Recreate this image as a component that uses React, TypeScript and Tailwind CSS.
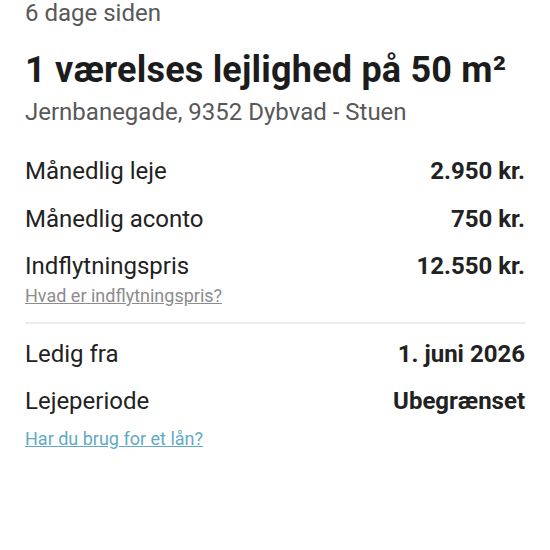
export default function App() {
  const rows1 = [
    { label: 'Månedlig leje', value: '2.950 kr.' },
    { label: 'Månedlig aconto', value: '750 kr.' },
    { label: 'Indflytningspris', value: '12.550 kr.' },
  ]
  const rows2 = [
    { label: 'Ledig fra', value: '1. juni 2026' },
    { label: 'Lejeperiode', value: 'Ubegrænset' },
  ]
  return (
    <div className="w-[550px] h-[550px] overflow-hidden bg-white px-[25px] text-[#222]" style={{ fontFamily: 'Roboto, sans-serif' }}>
      <p className="-mt-[1px] text-[24px] leading-[28px] text-[#585858]">6 dage siden</p>
      <h1 className="mt-[22px] text-[36px] leading-[42px] font-bold tracking-[0.2px] text-[#1c1c1c]">1 værelses lejlighed på 50 m²</h1>
      <p className="mt-[7px] text-[24px] leading-[28px] text-[#585858]">Jernbanegade, 9352 Dybvad - Stuen</p>

      <div className="mt-[31px] flex flex-col gap-[19.5px]">
        {rows1.map(r => (
          <div key={r.label} className="flex justify-between items-center text-[24px] leading-[28px]">
            <span>{r.label}</span>
            <span className="font-bold">{r.value}</span>
          </div>
        ))}
      </div>
      <a className="block mt-[5px] text-[18px] leading-[22px] text-[#8c8c8c] underline">Hvad er indflytningspris?</a>
      <div className="mt-[15px] h-[2px] bg-[#ececec]" />

      <div className="mt-[16px] flex flex-col gap-[19px]">
        {rows2.map(r => (
          <div key={r.label} className="flex justify-between items-center text-[24px] leading-[28px]">
            <span>{r.label}</span>
            <span className="font-bold">{r.value}</span>
          </div>
        ))}
      </div>
      <a className="block mt-[13px] text-[18px] leading-[22px] text-[#62aac4] underline">Har du brug for et lån?</a>
    </div>
  )
}
